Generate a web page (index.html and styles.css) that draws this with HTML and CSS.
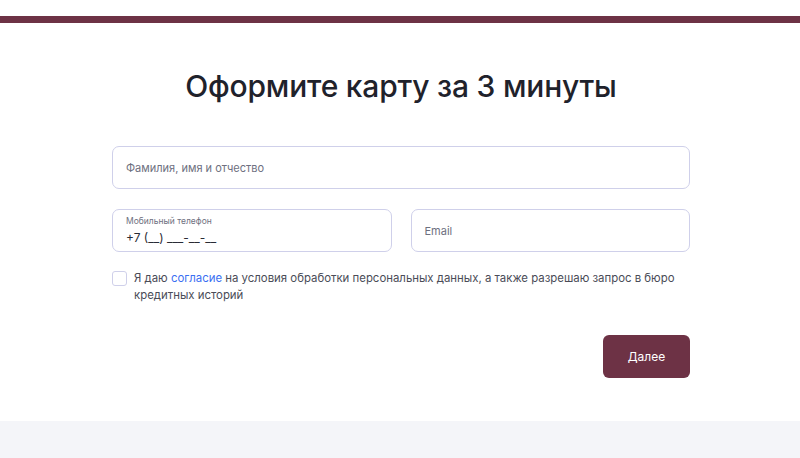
FILE: index.html
```html
<!DOCTYPE html>
<html lang="ru">
<head>
<meta charset="utf-8">
<link rel="stylesheet" href="styles.css">
</head>
<body>
<div class="top-space"></div>
<div class="brand-bar"></div>
<main class="section">
  <div class="form-wrap">
    <h1 class="title">Оформите карту за 3 минуты</h1>
    <div class="field field-full">
      <span class="placeholder">Фамилия, имя и отчество</span>
    </div>
    <div class="row">
      <div class="field field-labeled">
        <span class="label">Мобильный телефон</span>
        <span class="value">+7 (__) ___-__-__</span>
      </div>
      <div class="field">
        <span class="placeholder">Email</span>
      </div>
    </div>
    <div class="consent">
      <span class="checkbox"></span>
      <p class="consent-text">Я даю <a class="link" href="#">согласие</a> на условия обработки персональных данных, а также разрешаю запрос в бюро кредитных историй</p>
    </div>
    <div class="actions">
      <button class="btn">Далее</button>
    </div>
  </div>
</main>
<footer class="footer"></footer>
</body>
</html>
```
FILE: styles.css
```css
html, body {
  margin: 0;
  padding: 0;
  background: #ffffff;
  font-family: Inter, "Noto Sans", Arial, sans-serif;
  color: #22252e;
}
.top-space {
  height: 16px;
}
.brand-bar {
  height: 7px;
  background: #6d3245;
}
.section {
  height: 398px;
  background: #ffffff;
  overflow: hidden;
}
.form-wrap {
  width: 578px;
  margin-left: calc(50% - 288px);
  display: flex;
  flex-direction: column;
}
.title {
  margin: 45px 0 42px;
  font-size: 30px;
  line-height: 36px;
  font-weight: 500;
  text-align: center;
  color: #1f222b;
  letter-spacing: -0.2px;
}
.field {
  box-sizing: border-box;
  height: 43px;
  border: 1px solid #cfd0ea;
  border-radius: 7px;
  background: #fff;
  display: flex;
  flex-direction: column;
  justify-content: center;
  padding: 0 13px;
  flex: 1;
}
.field-full {
  flex: none;
}
.placeholder {
  font-size: 11px;
  color: #6e7080;
}
.row {
  display: flex;
  gap: 19px;
  margin-top: 20px;
}
.field-labeled {
  justify-content: flex-start;
  padding-top: 6px;
}
.label {
  font-size: 8.5px;
  line-height: 11px;
  color: #6e7080;
}
.value {
  font-size: 12px;
  line-height: 17px;
  margin-top: 2px;
  color: #2a2c35;
}
.consent {
  display: flex;
  gap: 7px;
  margin-top: 18px;
}
.checkbox {
  box-sizing: border-box;
  width: 15px;
  height: 15px;
  flex: none;
  border: 1px solid #cfd0ea;
  border-radius: 3px;
  margin-top: 1px;
}
.consent-text {
  margin: 0;
  font-size: 11.4px;
  line-height: 16.5px;
  color: #4a4c57;
}
.link {
  color: #3b6ff2;
  text-decoration: none;
}
.actions {
  display: flex;
  justify-content: flex-end;
  margin-top: 32px;
}
.btn {
  width: 87px;
  height: 43px;
  border: none;
  border-radius: 6px;
  background: #6d3245;
  color: #ffffff;
  font-family: inherit;
  font-size: 12px;
  font-weight: 400;
}
.footer {
  height: 37px;
  background: #f4f5f9;
}
```
